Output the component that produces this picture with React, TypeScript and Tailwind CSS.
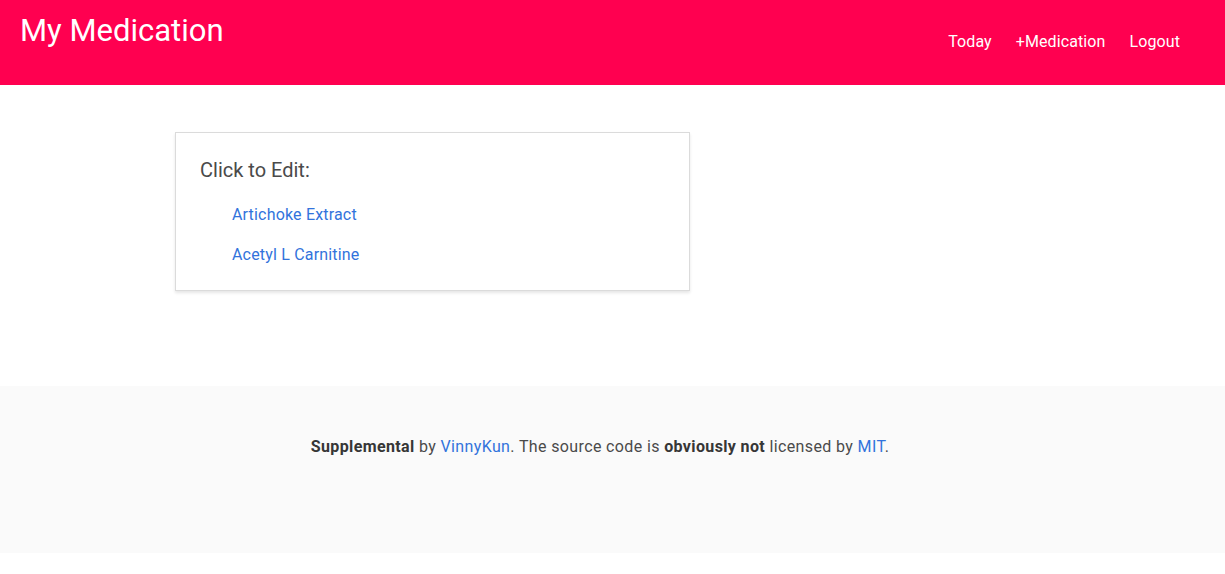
import React from "react";

export default function App() {
  return (
    <div className="min-h-[574px] bg-white text-[#4a4a4a]" style={{ fontFamily: "Roboto, Inter, 'Liberation Sans', sans-serif" }}>
      <header className="flex h-[85px] items-start justify-between bg-[#ff0050] text-white">
        <h1 className="pl-5 pt-[11px] text-[31px] leading-[40px]">My Medication</h1>
        <nav className="flex gap-6 pr-[45px] pt-[31px] text-[16px] leading-[22px] tracking-[0.1px]">
          <a>Today</a>
          <a>+Medication</a>
          <a>Logout</a>
        </nav>
      </header>
      <main className="px-[175px] pb-[95px] pt-[47px]">
        <div className="w-[515px] border border-[#dbdbdb] bg-white px-6 pb-[23px] pt-[23px] shadow-[0_2px_3px_rgba(10,10,10,0.1)]">
          <p className="text-[20px] leading-[28px]">Click to Edit:</p>
          <ul className="mt-[19px] flex flex-col gap-[16px] pl-8 text-[16px] leading-[24px] tracking-[0.18px] text-[#3273dc]">
            <li><a>Artichoke Extract</a></li>
            <li><a>Acetyl L Carnitine</a></li>
          </ul>
        </div>
      </main>
      <footer className="h-[167px] bg-[#fafafa] pr-[25px] pt-[48px] text-center text-[16px] leading-[24px] tracking-[0.37px]">
        <p className="pt-[1px]">
          <strong className="font-bold text-[#363636]">Supplemental</strong> by <a className="text-[#3273dc]">VinnyKun</a>. The source code is <strong className="font-bold text-[#363636]">obviously not</strong> licensed by <a className="text-[#3273dc]">MIT</a>.
        </p>
      </footer>
    </div>
  );
}
